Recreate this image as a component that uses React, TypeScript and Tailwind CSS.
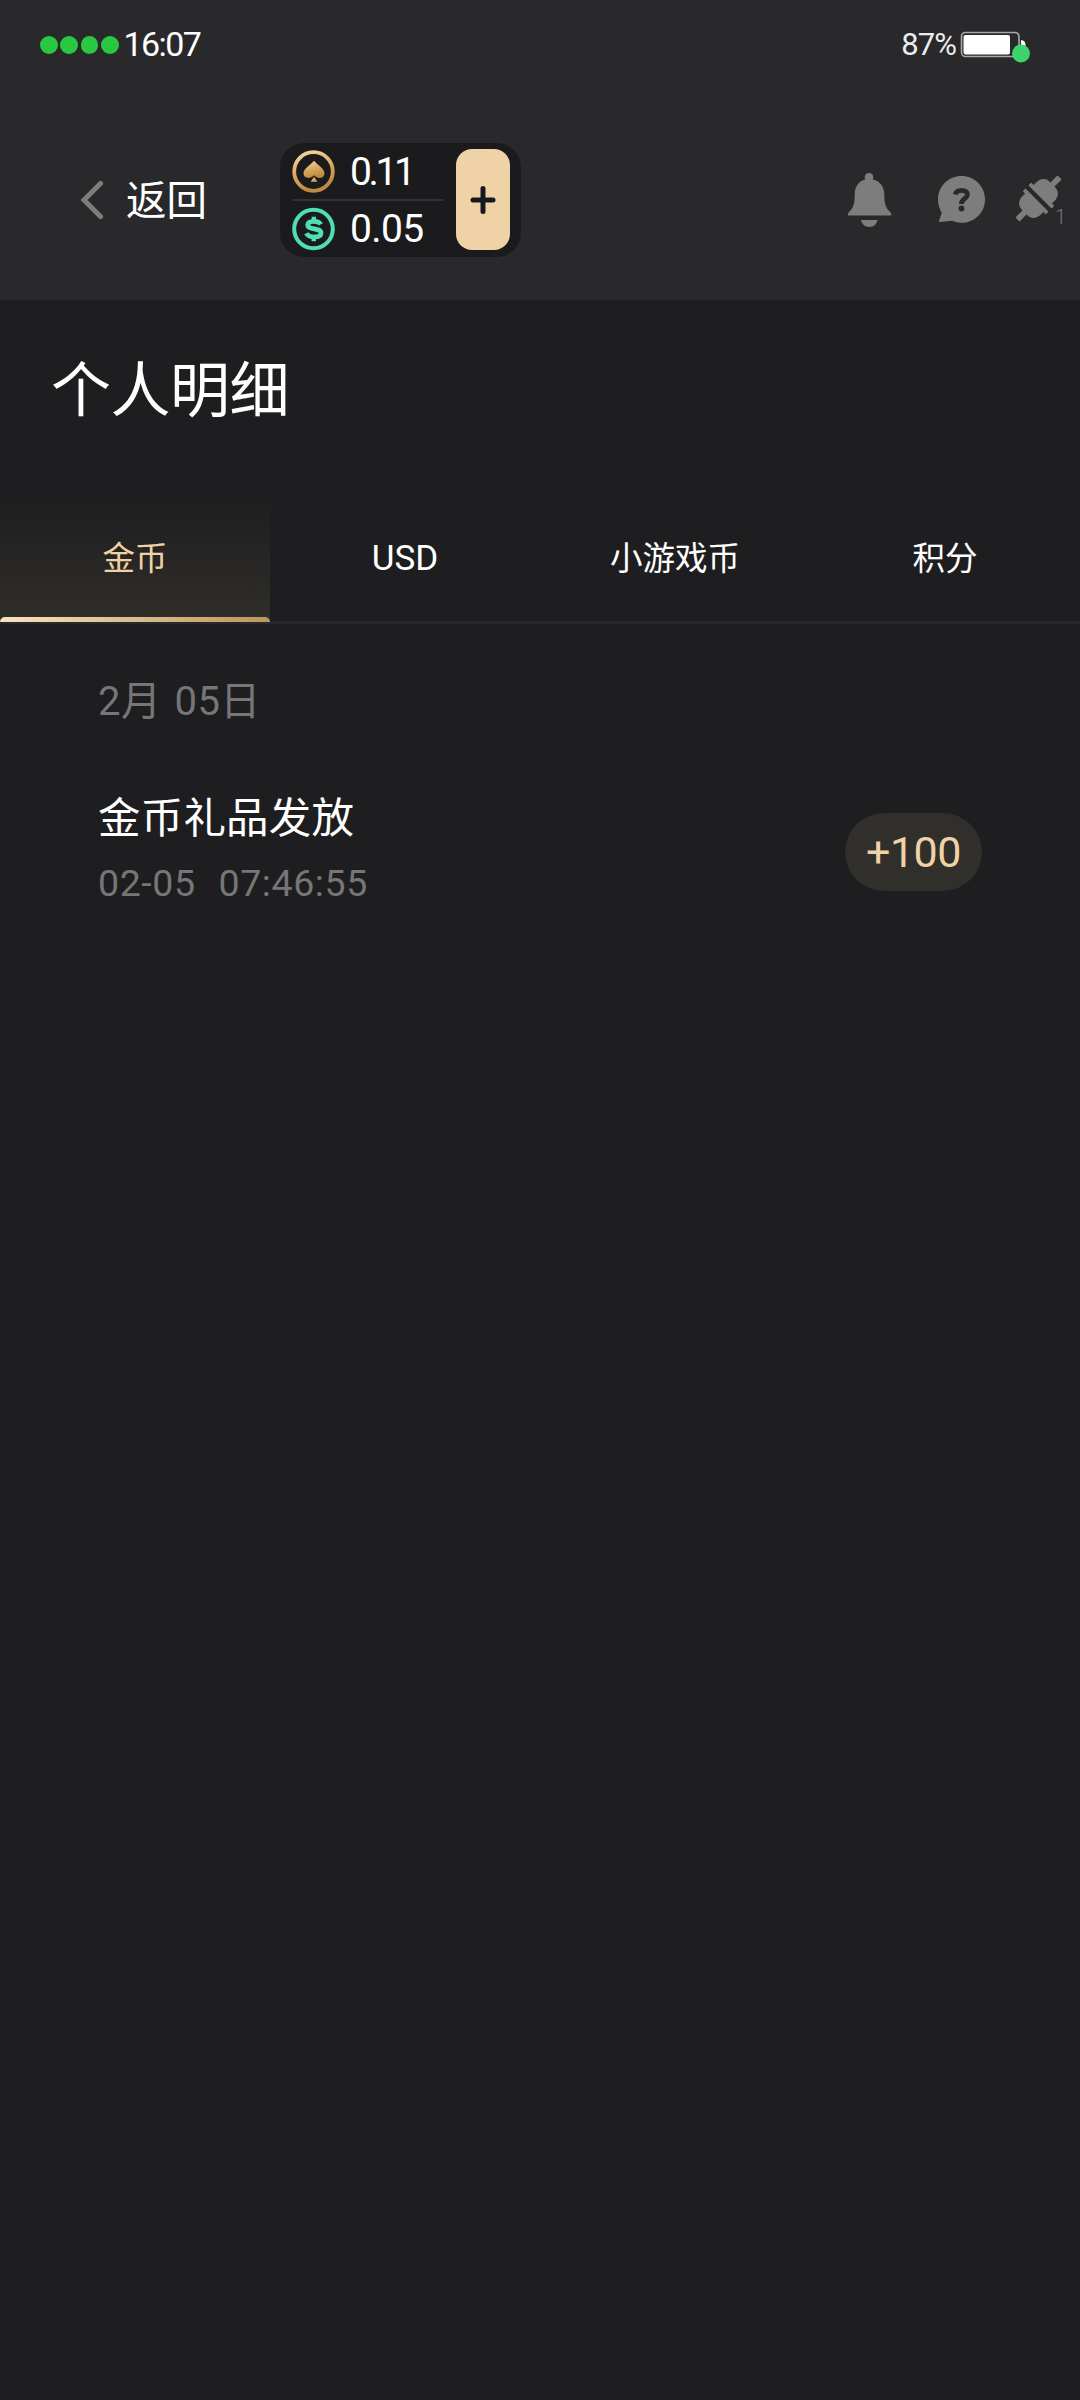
import type { ReactNode } from "react";
import clsx from "clsx";

const TABS = ["金币", "USD", "小游戏币", "积分"] as const;

const RECORDS = [{ title: "金币礼品发放", time: "02-05\u00a0\u00a007:46:55", amount: "+100" }];

function StatusBar() {
  return (
    <div className="flex h-[90px] items-center justify-between pl-10 pr-[50px]">
      <div className="flex items-center">
        <div className="flex gap-[2.5px]">
          {[0, 1, 2, 3].map((dot) => (
            <span key={dot} className="h-[18px] w-[17.75px] rounded-full bg-[#2ac840]" />
          ))}
        </div>
        <span className="ml-[5px] pb-[3px] text-[34px] leading-none tracking-[-1.6px]">16:07</span>
      </div>
      <div className="flex items-center">
        <span className="pb-px text-[31px] leading-none tracking-[-0.9px] text-[#ececec]">87%</span>
        <svg className="ml-1 mt-[2px] h-[36px] w-[70px]" viewBox="0 0 70 36" aria-hidden>
          <rect x="1.5" y="4.5" width="57.5" height="24" rx="4" fill="none" stroke="#a8a8a8" strokeWidth="1.6" />
          <rect x="3.5" y="7" width="46.5" height="19.5" rx="2" fill="#fff" />
          <path d="M61 12c3 .5 4.500 2 4.500 5v4H61z" fill="#fff" />
          <circle cx="61" cy="25.500" r="9" fill="#3bd56c" />
        </svg>
      </div>
    </div>
  );
}

function SpadeCoin() {
  return (
    <svg className="h-[44px] w-[44px]" viewBox="0 0 44 44" aria-hidden>
      <defs>
        <linearGradient id="gold" x1="0" y1="0" x2="0.3" y2="1">
          <stop offset="0" stopColor="#f6d9a6" />
          <stop offset="0.55" stopColor="#d9a95f" />
          <stop offset="1" stopColor="#c08a3e" />
        </linearGradient>
      </defs>
      <circle cx="21.500" cy="21.500" r="19.300" fill="none" stroke="url(#gold)" strokeWidth="3.800" />
      <path
        d="M22 10.800c2.500 3.500 10.500 7.600 10.500 12.500 0 3-2.200 4.700-4.700 4.700-2.200 0-4-1-5.800-2.800-1.800 1.800-3.600 2.800-5.800 2.800-2.500 0-4.700-1.700-4.700-4.700 0-4.900 8-9 10.500-12.500z"
        fill="url(#gold)"
      />
      <path d="M22 26.800l3.400 4.900h-6.800z" fill="#d9a95f" />
    </svg>
  );
}

function DollarCoin() {
  return (
    <svg className="h-[44px] w-[44px]" viewBox="0 0 44 44" aria-hidden>
      <circle cx="21.500" cy="22" r="19.300" fill="none" stroke="#4fdfb3" strokeWidth="4" />
      <path
        d="M28.800 17.300c-1.200-2.200-3.800-3-7-3-3.700 0-6 1.300-6 3.600 0 5.400 13.200 2.400 13.200 8 0 2.600-2.700 4-6.700 4-4 0-6.700-1.200-7.900-3.700"
        fill="none"
        stroke="#4fdfb3"
        strokeWidth="4.800"
      />
      <path d="M21.800 9.800v4.500M21.800 29.500v4.700" stroke="#4fdfb3" strokeWidth="4.400" />
    </svg>
  );
}

function Balance({ icon, value, className }: { icon: ReactNode; value: string; className?: string }) {
  return (
    <div className="flex h-[55px] items-center">
      {icon}
      <span className={clsx("ml-[14px] pt-px text-[39px] leading-none", className)}>{value}</span>
    </div>
  );
}

function Wallet() {
  return (
    <div className="flex h-[114px] w-[241px] items-center rounded-[24px] bg-[#1b1b1d] pl-3 pr-3">
      <div className="flex w-[152px] shrink-0 flex-col">
        <Balance icon={<SpadeCoin />} value="0.11" className="tracking-[-3.4px]" />
        <div className="h-[2px] bg-[#303335]" />
        <Balance icon={<DollarCoin />} value="0.05" className="tracking-[-0.6px]" />
      </div>
      <button className="mb-px ml-3 flex h-[101px] w-[54px] shrink-0 items-center justify-center rounded-[16px] bg-[#efd3a6]">
        <svg className="h-[30px] w-[26px]" viewBox="0 0 26 30" aria-hidden>
          <path d="M13 3.500v23M3 15h20" stroke="#17181c" strokeWidth="5" strokeLinecap="round" />
        </svg>
      </button>
    </div>
  );
}

function Actions() {
  return (
    <svg className="h-[64px] w-[240px] text-[#7d7d7e]" viewBox="840 168 240 64" fill="currentColor" aria-hidden>
      {/* bell */}
      <circle cx="869" cy="177.300" r="4.300" />
      <path d="M869 179c9.500 0 15.300 6.500 15.300 15.500 0 10 1.700 13.500 6.200 18 .6.700.7 1.500.7 3.100H848c0-1.600.1-2.400.7-3.100 4.500-4.500 6-8 6-18 0-9 5.300-15.500 14.300-15.500z" />
      <path d="M861 220h16.500c-.6 4.200-4 7-8.200 7s-7.600-2.800-8.300-7z" />
      {/* help bubble */}
      <path d="M961.500 176c13 0 23.500 10.300 23.500 23.400s-10.500 23.400-23.500 23.400c-3.500 0-6.600-.700-9.400-2l-12 1.300c-1 .1-1.400-.6-1-1.500l2.700-7.800c-2.300-3.900-3.800-8.500-3.800-13.400 0-13.100 10.500-23.400 23.500-23.400z" />
      <path
        d="M955.300 194.500c.6-2.700 2.800-4.200 6-4.200 3.800 0 6.100 1.600 6.100 4.300 0 4-6 4.200-6 9.300"
        fill="none"
        stroke="#29292b"
        strokeWidth="4.800"
      />
      <circle cx="961.500" cy="208.500" r="2.900" fill="#29292b" />
      {/* plug and socket */}
      <g transform="translate(1038.500 198.500) rotate(45) scale(0.96)">
        <rect x="-17" y="-6.300" width="34" height="4" rx="0.500" />
        <path d="M-13.500-5.500v-4.500c0-6.500 4-10.500 9-10.500h9c5 0 9 4 9 10.500v4.500z" />
        <rect x="-3" y="-31" width="6" height="12" rx="1" />
        <rect x="-17" y="2.300" width="34" height="4" rx="0.500" />
        <path d="M-13.500 5.500v4.500c0 6.500 4 10.500 9 10.500h9c5 0 9-4 9-10.500v-4.500z" />
        <rect x="-3" y="19" width="6" height="12" rx="1" />
      </g>
      <text x="1055" y="223.500" fontSize="20" fontWeight="300" fill="#78787a">
        1
      </text>
    </svg>
  );
}

function TopBar() {
  return (
    <div className="flex h-[210px] items-start pl-[80px] pt-[53px]">
      <button className="flex h-[114px] w-[200px] items-center">
        <svg className="h-[40px] w-[24px]" viewBox="0 0 24 40" aria-hidden>
          <path d="M20.500 3.500L4 20l16.500 16.500" fill="none" stroke="#7d7d7e" strokeWidth="5" strokeLinecap="round" />
        </svg>
        <span className="ml-[22px] pt-[2px] text-[40.5px] leading-none">返回</span>
      </button>
      <Wallet />
      <div className="ml-auto pt-[25px]">
        <Actions />
      </div>
    </div>
  );
}

function Tabs() {
  return (
    <nav className="flex h-[124px]">
      {TABS.map((label, i) => (
        <div
          key={label}
          className={clsx(
            "flex w-[270px] flex-col justify-end",
            i === 0 && "bg-linear-to-b from-[#1e1e20] to-[#302e29] text-[#efd3a6]",
          )}
        >
          <span
            className={clsx(
              "flex flex-1 items-center justify-center leading-none",
              label === "USD" ? "pt-[2px] text-[35px]" : "pt-[3px] text-[32.5px]",
            )}
          >
            {label}
          </span>
          {i === 0 ? (
            <span className="h-[5px] rounded-t-[5px] bg-linear-to-r from-[#f9e3c0] to-[#bb965a]" />
          ) : (
            <span className="h-[5px] border-b border-[#262628]" />
          )}
        </div>
      ))}
    </nav>
  );
}

export default function App() {
  return (
    <div className="flex h-[2400px] w-[1080px] flex-col overflow-hidden bg-[#1e1e20] font-[Roboto,'Noto_Sans_CJK_SC',sans-serif] whitespace-nowrap text-white">
      <header className="h-[300px] bg-[#29292c]">
        <StatusBar />
        <TopBar />
      </header>

      <h1 className="h-[198px] pl-[51px] pt-[62px] text-[60px] leading-[60px] tracking-[-0.5px]">个人明细</h1>

      <Tabs />
      <div className="h-[2px] bg-[#29292b]" />

      <main className="px-[98px]">
        <p className="pt-[58px] text-[40px] leading-[40px] tracking-[0.4px] text-[#767677] [word-spacing:3px]">
          2月 05日
        </p>
        {RECORDS.map((record) => (
          <div key={record.time} className="flex items-center justify-between pt-[73px]">
            <div>
              <p className="text-[42.500px] leading-[48px] tracking-[0.2px]">{record.title}</p>
              <p className="mt-[20px] text-[37.5px] leading-[40px] tracking-[0.6px] text-[#767677] [word-spacing:1.5px]">
                {record.time}
              </p>
            </div>
            <span className="mt-[6px] flex h-[78px] w-[137px] items-center justify-center rounded-full bg-[#302f2b] text-[43px] leading-none tracking-[-0.5px] text-[#efd3a6]">
              {record.amount}
            </span>
          </div>
        ))}
      </main>
    </div>
  );
}
